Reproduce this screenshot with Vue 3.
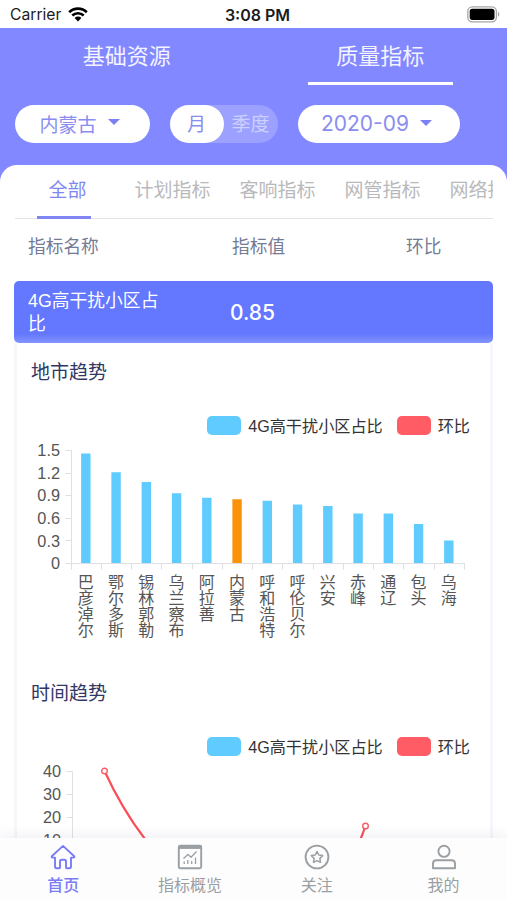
<template>
  <div class="page">
    <div class="status-bar">
      <div class="carrier">
        <span>Carrier</span>
        <svg width="20" height="15" viewBox="0 0 20 15">
          <path d="M1.2 5.2a12.6 12.6 0 0 1 17.6 0" />
          <path d="M4.3 8.5a8.2 8.2 0 0 1 11.4 0" />
          <path class="solid" d="M6.6 10.9a4.9 4.9 0 0 1 6.8 0L10 14.4z" />
        </svg>
      </div>
      <div class="clock">3:08 PM</div>
      <svg class="battery" width="33" height="17" viewBox="0 0 33 17">
        <rect x="0.8" y="0.8" width="28.6" height="15" rx="4.5" fill="none" stroke="#a6a6a6" stroke-width="1.3" />
        <rect x="2.7" y="2.7" width="24.8" height="11.2" rx="2.6" fill="#000" />
        <path d="M31 5.8c1.8.8 1.8 4.2 0 5z" fill="#a6a6a6" />
      </svg>
    </div>

    <div class="header">
      <div class="main-tabs">
        <div
          v-for="item in mainTabs"
          :key="item"
          class="main-tab"
          :class="{ active: item === mainTab }"
          @click="mainTab = item"
        >
          <span>{{ item }}</span>
        </div>
      </div>
      <div class="filters">
        <div class="pill area">内蒙古<i class="arrow"></i></div>
        <div class="switch">
          <span
            v-for="item in periods"
            :key="item"
            :class="{ on: item === period }"
            @click="period = item"
          >{{ item }}</span>
        </div>
        <div class="pill date"><span>2020-09</span><i class="arrow"></i></div>
      </div>
    </div>

    <div class="panel">
      <div class="sub-tabs">
        <div
          v-for="item in subTabs"
          :key="item"
          class="sub-tab"
          :class="{ active: item === subTab }"
          @click="subTab = item"
        >{{ item }}</div>
      </div>

      <div class="grid-row table-head">
        <div>指标名称</div>
        <div>指标值</div>
        <div>环比</div>
      </div>
      <div class="grid-row table-row">
        <div class="name">4G高干扰小区占比</div>
        <div class="value">0.85</div>
        <div></div>
      </div>

      <div class="card">
        <section class="block">
          <h3>地市趋势</h3>
          <div class="legend">
            <span class="legend-item"><i class="blue"></i>4G高干扰小区占比</span>
            <span class="legend-item"><i class="red"></i>环比</span>
          </div>
          <svg class="chart" width="478" height="210" viewBox="0 0 478 210">
            <g class="axis">
              <path d="M56.5 8.5V122M56.5 121.5H450" />
              <path v-for="(t, i) in barTicks" :key="t" :d="`M50.5 ${Math.round(9 + i * 22.5) - 0.5}h6`" />
              <path v-for="i in 14" :key="'x' + i" :d="`M${Math.round(56.5 + (i - 1) * step) - 0.5} 121.5v6`" />
            </g>
            <text v-for="(t, i) in barTicks" :key="t" class="y-label" x="45" :y="14.2 + i * 22.6">{{ t }}</text>
            <g v-for="(c, i) in cities" :key="c.name">
              <rect
                :x="barX(i) - 4.7"
                :y="121 - c.value * 75"
                width="9.4"
                :height="c.value * 75"
                :fill="c.name === '内蒙古' ? '#fb9309' : '#5fcbff'"
              />
              <text
                v-for="(ch, j) in c.name"
                :key="j"
                class="x-label"
                :x="barX(i)"
                :y="145.6 + j * 16.1"
              >{{ ch }}</text>
            </g>
          </svg>
        </section>

        <section class="block">
          <h3>时间趋势</h3>
          <div class="legend">
            <span class="legend-item"><i class="blue"></i>4G高干扰小区占比</span>
            <span class="legend-item"><i class="red"></i>环比</span>
          </div>
          <svg class="chart" width="478" height="210" viewBox="0 0 478 210">
            <g class="axis">
              <path d="M57.5 8.5V122" />
              <path v-for="(t, i) in lineTicks" :key="t" :d="`M51.5 ${8.5 + i * 23}h6`" />
            </g>
            <text v-for="(t, i) in lineTicks" :key="t" class="y-label" x="46" :y="14 + i * 23">{{ t }}</text>
            <path class="line" d="M89.5 8C101 33 113 54 130 76C170 128 230 150 290 135C325 126 341 90 350.5 63" />
            <circle v-for="p in points" :key="p[0]" class="dot" :cx="p[0]" :cy="p[1]" r="2.8" />
          </svg>
        </section>
      </div>
    </div>

    <div class="tab-bar">
      <div class="tab active">
        <svg width="26" height="26" viewBox="0 0 26 26">
          <path d="M13 1.9L1.8 12.3q-.6 1.2.8 1.3H5v9q0 1.6 1.6 1.6h2.6q.8 0 .8-.8V17.5q0-1.7 1.5-1.7h3q1.5 0 1.5 1.7v5.9q0 .8.8.8h2.6q1.6 0 1.6-1.6v-9h2.4q1.4-.1.8-1.3z" />
        </svg>
        <span>首页</span>
      </div>
      <div class="tab">
        <svg width="26" height="26" viewBox="0 0 26 26">
          <rect x="1.8" y="1.8" width="22.4" height="22.4" rx="1.5" />
          <path d="M1.5 3.2h23" stroke-width="3.4" />
          <path d="M6.5 14.5l4.5-4 3 2.8 5.5-5.8" stroke-width="1.3" />
          <path d="M7.2 17.5v2.5M10.8 16v4M14.7 17v3M18.5 13.5v6.5" stroke-width="1.3" />
        </svg>
        <span>指标概览</span>
      </div>
      <div class="tab">
        <svg width="26" height="26" viewBox="0 0 26 26">
          <circle cx="13" cy="13" r="11.4" />
          <path d="M13 7.5l1.8 3.5 3.9.6-2.8 2.8.6 3.9-3.5-1.7-3.5 1.7.6-3.9-2.8-2.8 3.9-.6z" stroke-width="1.5" />
        </svg>
        <span>关注</span>
      </div>
      <div class="tab">
        <svg width="26" height="26" viewBox="0 0 26 26">
          <circle cx="13" cy="7.3" r="5.6" />
          <path d="M2 24.2v-4.500q0-3.400 3.400-3.400h15.200q3.400 0 3.400 3.400v4.500z" />
        </svg>
        <span>我的</span>
      </div>
    </div>
  </div>
</template>

<script setup>
import { ref } from 'vue'

const mainTabs = ['基础资源', '质量指标']
const mainTab = ref('质量指标')

const periods = ['月', '季度']
const period = ref('月')

const subTabs = ['全部', '计划指标', '客响指标', '网管指标', '网络指标']
const subTab = ref('全部')

const cities = [
  { name: '巴彦淖尔', value: 1.46 },
  { name: '鄂尔多斯', value: 1.21 },
  { name: '锡林郭勒', value: 1.08 },
  { name: '乌兰察布', value: 0.93 },
  { name: '阿拉善', value: 0.87 },
  { name: '内蒙古', value: 0.85 },
  { name: '呼和浩特', value: 0.83 },
  { name: '呼伦贝尔', value: 0.78 },
  { name: '兴安', value: 0.76 },
  { name: '赤峰', value: 0.66 },
  { name: '通辽', value: 0.66 },
  { name: '包头', value: 0.52 },
  { name: '乌海', value: 0.3 }
]

const barTicks = ['1.5', '1.2', '0.9', '0.6', '0.3', '0']
const lineTicks = ['40', '30', '20', '10']
const points = [[89.5, 8], [350.5, 63]]

// 每个分类的宽度
const step = 30.25
const barX = (i) => 55.7 + step * (i + 0.5)
</script>

<style>
body {
  background: #fff;
  overflow: hidden;
}
</style>

<style scoped>
.page {
  display: flex;
  flex-direction: column;
  height: 900px;
  overflow: hidden;
  background: #8288ff;
  font-family: "Liberation Sans", "Noto Sans CJK SC", sans-serif;
}

.status-bar {
  display: grid;
  grid-template-columns: 1fr auto 1fr;
  align-items: center;
  flex: none;
  height: 28px;
  padding: 0 6px 0 10px;
  background: #fff;
  color: #1c1c1c;
  font-family: Inter, sans-serif;
  font-size: 15.7px;
}

.carrier {
  display: flex;
  align-items: center;
  gap: 7px;
  padding-top: 1px;
}

.carrier svg {
  fill: none;
  stroke: #000;
  stroke-width: 2.6;
}

.carrier .solid {
  fill: #000;
  stroke: none;
}

.clock {
  padding-top: 1px;
  margin-right: -4px;
  font-size: 16px;
  font-weight: 600;
}

.battery {
  justify-self: end;
  margin-right: 1px;
}

.header {
  flex: none;
  height: 137px;
}

.main-tabs {
  display: flex;
}

.main-tab {
  display: flex;
  flex: 1;
  justify-content: center;
  color: #f4f4ff;
  font-size: 22px;
  line-height: 51px;
}

.main-tab span {
  width: 145px;
  padding-top: 3px;
  text-align: center;
  border-bottom: 3px solid transparent;
}

.main-tab.active span {
  border-bottom-color: #fff;
}

.filters {
  display: flex;
  align-items: center;
  padding: 20px 14px 0 14.5px;
}

.pill {
  display: flex;
  align-items: center;
  justify-content: center;
  box-sizing: border-box;
  height: 38px;
  border-radius: 19px;
  background: #fff;
  color: #8a8df0;
  font-size: 19px;
}

.area {
  width: 135px;
  padding: 0 5px 2px 0;
}

.date {
  width: 162px;
  margin-left: 20px;
  padding: 0 4px 1px 0;
  font-family: Inter, sans-serif;
  font-size: 21px;
}

.arrow {
  margin-left: 11px;
  margin-bottom: 2px;
  border: 6px solid transparent;
  border-top-color: #7b80f5;
  border-bottom: 0;
}

.switch {
  display: flex;
  width: 108px;
  height: 38px;
  margin-left: 20px;
  border-radius: 19px;
  background: #9ca1ff;
  color: #ced0ff;
  font-size: 19px;
  line-height: 40px;
  text-align: center;
}

.switch span {
  flex: 1;
  height: 38px;
}

.switch .on {
  border-radius: 19px;
  background: #fff;
  color: #8a8df0;
}

.panel {
  flex: 1;
  min-height: 0;
  padding: 0 14px;
  overflow: hidden;
  border-radius: 17px 17px 0 0;
  background: #fff;
}

.sub-tabs {
  display: flex;
  box-sizing: border-box;
  height: 54px;
  margin-left: 1px;
  overflow: hidden;
  box-shadow: inset 0 -1px #e4e4e6;
}

.sub-tab {
  display: flex;
  flex: none;
  flex-direction: column;
  align-items: center;
  justify-content: space-between;
  width: 105px;
  color: #b9b9bb;
  font-size: 19px;
  line-height: 51px;
}

.sub-tab.active {
  color: #8186f5;
}

.sub-tab.active::after {
  content: '';
  width: 54px;
  height: 3px;
  margin-right: 7px;
  background: #8085f2;
}

.grid-row {
  display: grid;
  grid-template-columns: 204px 174px 1fr;
  align-items: center;
  padding-left: 14px;
}

.table-head {
  height: 52px;
  margin-bottom: 10px;
  color: #747b95;
  font-size: 17.7px;
}

.table-row {
  height: 62px;
  border-radius: 5px;
  background: linear-gradient(#6377ff 85%, #8494ff);
  color: #fff;
}

.name {
  width: 136px;
  padding-top: 1px;
  font-size: 17.8px;
  line-height: 23px;
}

.value {
  margin-left: -2px;
  font-family: Inter, sans-serif;
  font-size: 21px;
  font-weight: 500;
}

.card {
  box-shadow: inset 3px 0 #f6f7fa, inset -3px 0 #f6f7fa;
}

.block {
  height: 321px;
}

h3 {
  margin: 0;
  padding: 16px 0 0 17px;
  color: #303765;
  font-size: 19px;
  font-weight: 400;
  line-height: 28px;
}

.legend {
  display: flex;
  justify-content: flex-end;
  gap: 14px;
  height: 20px;
  padding: 28px 23px 0 0;
}

.legend-item {
  display: flex;
  align-items: center;
  gap: 7px;
  color: #333;
  font-size: 16.15px;
}

.legend-item i {
  width: 34px;
  height: 19px;
  border-radius: 5px;
}

.blue {
  background: #5fcbff;
}

.red {
  background: #ff5c66;
}

.chart {
  display: block;
  margin: 7px 0 0 1px;
}

.axis {
  fill: none;
  stroke: #e0e0e4;
}

.y-label {
  fill: #555;
  font-size: 16.3px;
  text-anchor: end;
}

.x-label {
  fill: #555;
  font-size: 16px;
  text-anchor: middle;
}

.line {
  fill: none;
  stroke: #fb4e56;
  stroke-width: 2.2;
}

.dot {
  fill: #fff;
  stroke: #fb5c68;
  stroke-width: 1.4;
}

.tab-bar {
  display: flex;
  flex: none;
  height: 62px;
  background: #fdfdfe;
  box-shadow: 0 -3px 12px rgba(60, 70, 120, 0.08);
  z-index: 1;
}

.tab {
  display: flex;
  flex: 1;
  flex-direction: column;
  align-items: center;
  padding-top: 6px;
  color: #9a9fa3;
  font-size: 16px;
  line-height: 31px;
}

.tab svg {
  flex: none;
  fill: none;
  stroke: currentColor;
  stroke-width: 1.9;
  stroke-linejoin: round;
}

.tab.active {
  color: #7a7cf5;
  font-weight: 500;
}
</style>
